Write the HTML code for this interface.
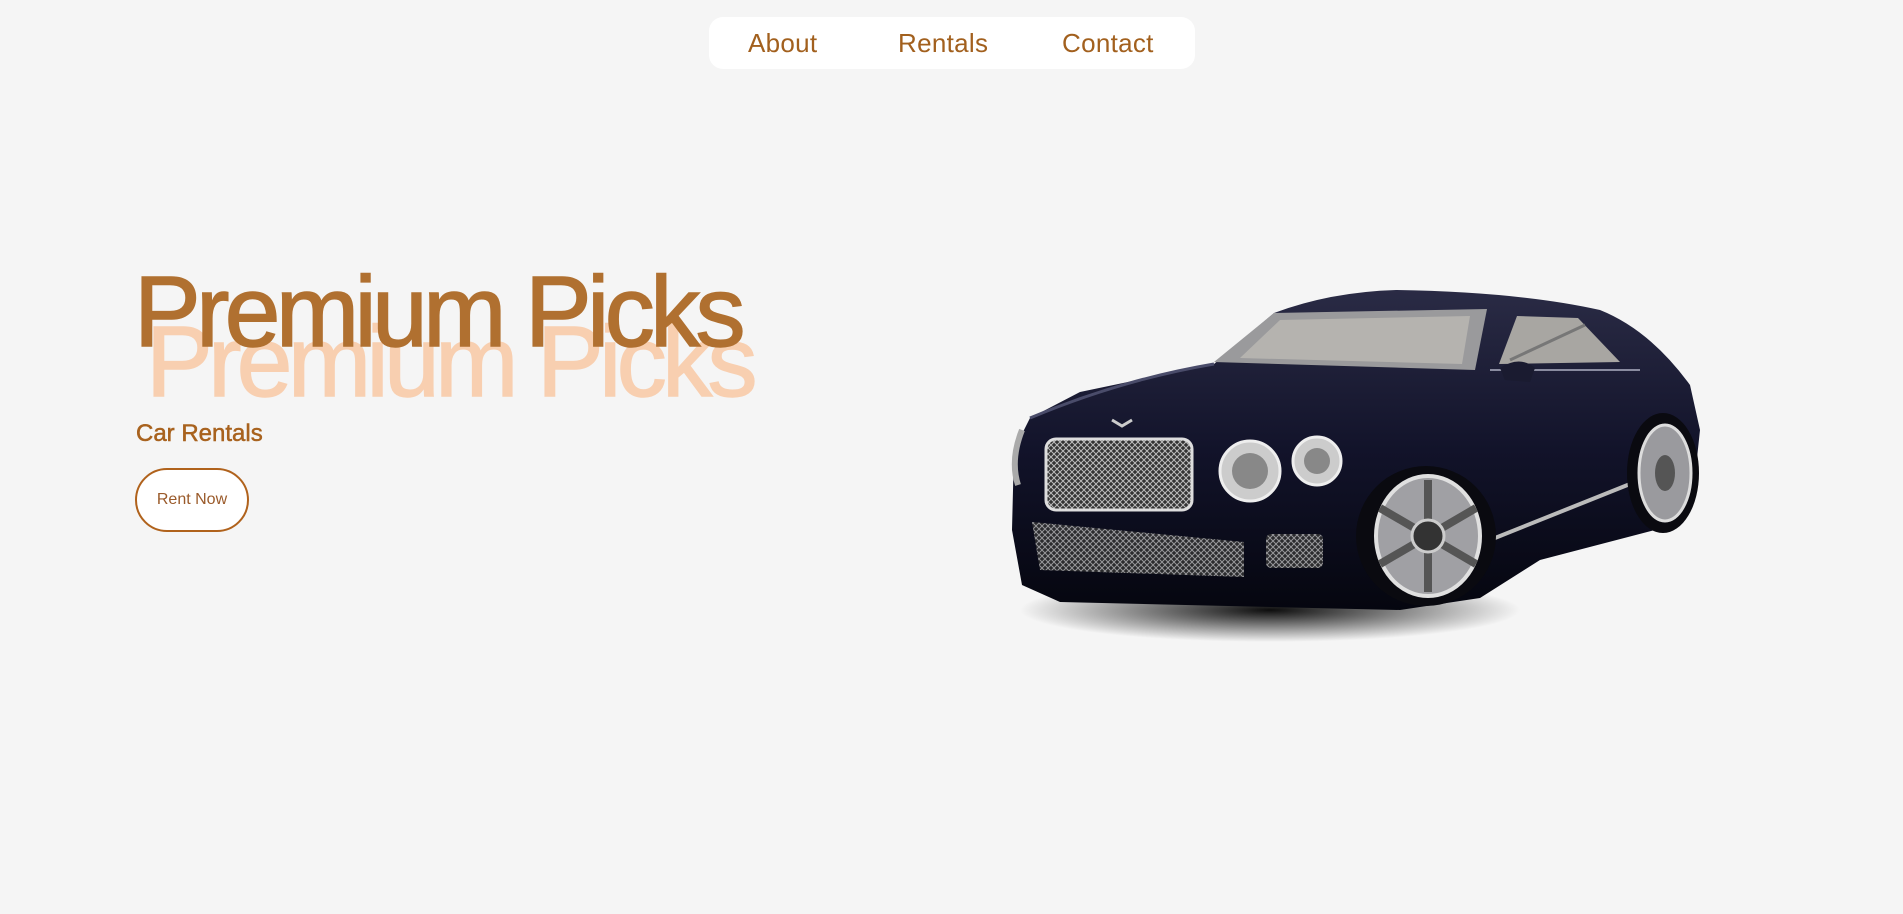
<!DOCTYPE html>
<html><head><meta charset="utf-8"><style>
html,body{margin:0;padding:0;width:1903px;height:914px;overflow:hidden;background:#f5f5f5;font-family:"Liberation Sans",sans-serif;}
.nav{position:absolute;left:709px;top:17px;width:486px;height:52px;background:#fff;border-radius:14px;}
.nav span{position:absolute;top:11px;font-size:26px;color:#a2601e;line-height:30px;letter-spacing:0.3px;}
.big{position:absolute;font-size:100px;letter-spacing:-4.6px;white-space:nowrap;line-height:100px;-webkit-text-stroke:1.5px currentColor;}
.sub{position:absolute;left:136px;top:422px;font-size:24px;line-height:24px;color:#a8621e;white-space:nowrap;-webkit-text-stroke:0.5px currentColor;}
.btn{position:absolute;left:135px;top:468px;width:110px;height:60px;border:2px solid #b0621c;border-radius:32px;background:#fff;color:#9a5a2a;font-size:16px;text-align:center;line-height:60px;}
</style></head><body>
<div class="nav"><span style="left:39px">About</span><span style="left:189px">Rentals</span><span style="left:353px">Contact</span></div>
<div class="big" style="left:146px;top:312px;color:#f8cfb0;">Premium Picks</div>
<div class="big" style="left:134px;top:262px;color:#b07030;">Premium Picks</div>
<div class="sub">Car Rentals</div>
<div class="btn">Rent Now</div>
<svg style="position:absolute;left:1000px;top:280px" width="710" height="370" viewBox="0 0 710 370">
<defs>
<radialGradient id="sh" cx="50%" cy="50%" r="50%"><stop offset="0" stop-color="#000" stop-opacity=".95"/><stop offset="1" stop-color="#000" stop-opacity="0"/></radialGradient>
<linearGradient id="bd" x1="0" y1="0" x2="0" y2="1"><stop offset="0" stop-color="#2a2b45"/><stop offset=".5" stop-color="#12132a"/><stop offset="1" stop-color="#05060f"/></linearGradient>
<pattern id="mesh" width="6" height="6" patternUnits="userSpaceOnUse"><rect width="6" height="6" fill="#333"/><path d="M0 0L6 6M6 0L0 6" stroke="#bbb" stroke-width="1"/></pattern>
</defs>
<ellipse cx="270" cy="330" rx="250" ry="32" fill="url(#sh)"/>
<path d="M22 305 L12 250 L14 170 L30 138 L80 112 L214 84 L274 33 Q330 12 396 10 Q520 12 600 30 Q650 50 690 105 L700 150 L692 225 L655 250 L540 280 L480 318 L400 330 L60 322 Z" fill="url(#bd)"/>
<path d="M30 138 Q120 100 214 84" stroke="#4a4c6a" stroke-width="3" fill="none"/>
<path d="M214 82 L274 33 L487 29 L475 90 Z" fill="#9a9a9c"/>
<path d="M240 78 L280 40 L470 36 L462 84 Z" fill="#c8c4bc" opacity=".6"/>
<path d="M499 84 L517 36 L578 38 L620 82 Z" fill="#a8a6a2"/>
<path d="M510 80 L585 45" stroke="#777" stroke-width="3"/>
<path d="M490 90 L640 90" stroke="#8a8ca0" stroke-width="2"/>
<path d="M500 88 Q520 75 535 88 L530 102 L505 100 Z" fill="#1a1b30"/>
<rect x="46" y="159" width="146" height="71" rx="10" fill="url(#mesh)" stroke="#ddd" stroke-width="3"/>
<path d="M32 242 L244 262 L244 297 L40 290 Z" fill="url(#mesh)" opacity=".8"/>
<rect x="266" y="254" width="57" height="34" rx="5" fill="url(#mesh)" opacity=".8"/>
<circle cx="250" cy="191" r="30" fill="#ccc" stroke="#eee" stroke-width="3"/>
<circle cx="250" cy="191" r="18" fill="#888"/>
<circle cx="317" cy="181" r="24" fill="#ccc" stroke="#eee" stroke-width="3"/>
<circle cx="317" cy="181" r="13" fill="#888"/>
<path d="M22 150 Q10 180 18 205" stroke="#aaa" stroke-width="6" fill="none"/>
<path d="M490 260 L640 200" stroke="#bbb" stroke-width="4"/>
<ellipse cx="663" cy="193" rx="36" ry="60" fill="#0a0a10"/>
<ellipse cx="665" cy="193" rx="26" ry="48" fill="#9a9a9e" stroke="#ddd" stroke-width="3"/>
<ellipse cx="665" cy="193" rx="10" ry="18" fill="#555"/>
<circle cx="426" cy="256" r="70" fill="#0a0a10"/>
<ellipse cx="428" cy="256" rx="52" ry="60" fill="#a0a0a4" stroke="#e0e0e0" stroke-width="4"/>
<g stroke="#555" stroke-width="8"><path d="M428 200 L428 312"/><path d="M380 228 L476 284"/><path d="M380 284 L476 228"/></g>
<circle cx="428" cy="256" r="16" fill="#333" stroke="#ccc" stroke-width="3"/>
<path d="M112 140 L122 146 L132 140" stroke="#ccc" stroke-width="3" fill="none"/>
</svg>
</body></html>
